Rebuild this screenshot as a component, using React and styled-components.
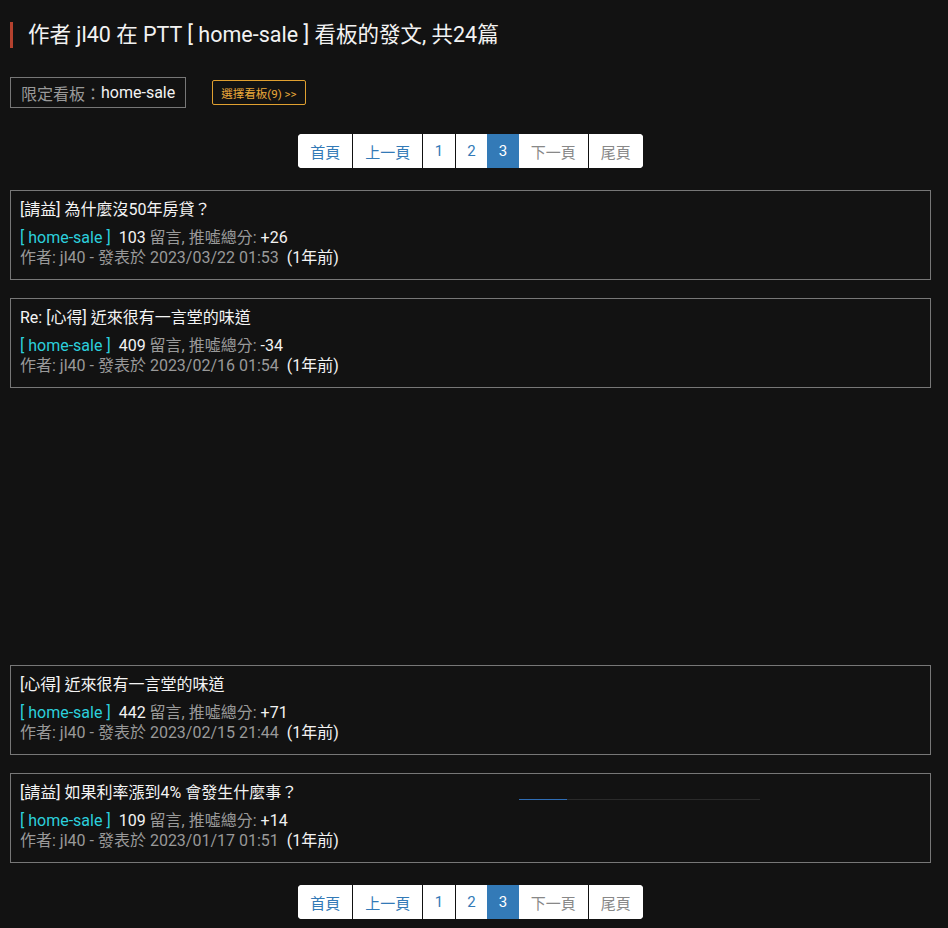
import styled, { createGlobalStyle } from "styled-components";

const posts = [
  { title: "[請益] 為什麼沒50年房貸？", comments: 103, score: "+26", date: "2023/03/22 01:53" },
  { title: "Re: [心得] 近來很有一言堂的味道", comments: 409, score: "-34", date: "2023/02/16 01:54" },
  { title: "[心得] 近來很有一言堂的味道", comments: 442, score: "+71", date: "2023/02/15 21:44", adBefore: true },
  { title: "[請益] 如果利率漲到4% 會發生什麼事？", comments: 109, score: "+14", date: "2023/01/17 01:51", loading: true },
];

const pages = [
  { label: "首頁" },
  { label: "上一頁" },
  { label: "1" },
  { label: "2" },
  { label: "3", active: true },
  { label: "下一頁", disabled: true },
  { label: "尾頁", disabled: true },
];

const Pager = () => (
  <PagerRow>
    <PagerList>
      {pages.map((p) => (
        <PageItem
          key={p.label}
          $active={p.active}
          $disabled={p.disabled}
          $digit={/^\d+$/.test(p.label)}
        >
          {p.label}
        </PageItem>
      ))}
    </PagerList>
  </PagerRow>
);

const PostCard = ({ post }) => (
  <Card>
    <PostTitle>{post.title}</PostTitle>
    <MetaLine>
      <Board>[ home-sale ]</Board>
      <Strong>{post.comments}</Strong> 留言, 推噓總分: <Strong>{post.score}</Strong>
    </MetaLine>
    <InfoLine>
      作者: jl40 - 發表於 {post.date}
      <Ago>(1年前)</Ago>
    </InfoLine>
    {post.loading && (
      <LoadBar>
        <LoadFill />
      </LoadBar>
    )}
  </Card>
);

const App = () => {
  return (
    <Page>
      <GlobalStyle />
      <Heading>作者 jl40 在 PTT [ home-sale ] 看板的發文, 共24篇</Heading>

      <FilterRow>
        <FilterBox>
          限定看板：<Strong>home-sale</Strong>
        </FilterBox>
        <PickButton>選擇看板(9) &gt;&gt;</PickButton>
      </FilterRow>

      <Pager />

      <List>
        {posts.map((post) => (
          <div key={post.date}>
            {post.adBefore && <AdSpace />}
            <PostCard post={post} />
          </div>
        ))}
      </List>

      <Pager />
    </Page>
  );
};

const GlobalStyle = createGlobalStyle`
  html, body {
    margin: 0;
    background: #121212;
  }
  body {
    font-family: Roboto, "Noto Sans CJK TC", sans-serif;
    color: #eee;
  }
`;

const Page = styled.div`
  width: 948px;
  padding: 22px 17px 8px 10px;
  min-height: 928px;
  box-sizing: border-box;
`;

const Heading = styled.h1`
  margin: 0;
  height: 26px;
  border-left: 3px solid #b4412e;
  padding-left: 15px;
  font-size: 21.5px;
  font-weight: 400;
  line-height: 26px;
  color: #f2f2f2;
  white-space: nowrap;
`;

const FilterRow = styled.div`
  display: flex;
  align-items: center;
  margin-top: 29px;
  height: 31px;
`;

const FilterBox = styled.div`
  box-sizing: border-box;
  height: 31px;
  display: flex;
  align-items: center;
  padding: 0 10px;
  border: 1px solid #777;
  font-size: 16px;
  color: #999;
`;

const PickButton = styled.div`
  margin-left: 26px;
  box-sizing: border-box;
  height: 25px;
  display: flex;
  align-items: center;
  padding: 0 8px;
  border: 1px solid #e0a030;
  border-radius: 2px;
  font-size: 11.5px;
  color: #eaa93a;
`;

const PagerRow = styled.div`
  display: flex;
  justify-content: center;
  margin: 26px 0 22px;
  &:last-child {
    margin: 4px 0 0;
  }
`;

const PagerList = styled.div`
  display: flex;
  border-radius: 4px;
  overflow: hidden;
  background: #fff;
`;

const PageItem = styled.div`
  height: 34px;
  box-sizing: border-box;
  padding: 0 ${(p) => (p.$digit ? "11.5px" : "12px")};
  display: flex;
  align-items: center;
  font-size: 15px;
  border-left: 1px solid #111;
  background: ${(p) => (p.$active ? "#337ab7" : "#fff")};
  color: ${(p) => (p.$active ? "#fff" : p.$disabled ? "#888" : "#337ab7")};
  &:first-child {
    border-left: none;
  }
  ${(p) => p.$active && "border-left: none;"}
  ${(p) => p.$disabled && "border-left: none;"}
  &:last-child {
    border-left: 1px solid #111;
  }
`;

const List = styled.div`
  display: flex;
  flex-direction: column;
`;

const AdSpace = styled.div`
  height: 259px;
`;

const Card = styled.div`
  position: relative;
  box-sizing: border-box;
  height: 90px;
  margin-bottom: 18px;
  padding: 9px 9px 10px;
  border: 1px solid #777;
`;

const PostTitle = styled.div`
  font-size: 16px;
  line-height: 20px;
  color: #f4f4f4;
`;

const MetaLine = styled.div`
  margin-top: 8px;
  font-size: 16px;
  line-height: 20px;
  color: #999;
`;

const Board = styled.span`
  color: #2ccfdc;
  font-size: 16px;
  margin-right: 8px;
`;

const Strong = styled.span`
  color: #f2f2f2;
`;

const InfoLine = styled.div`
  font-size: 16px;
  line-height: 20px;
  color: #999;
`;

const Ago = styled.span`
  margin-left: 8px;
  color: #f2f2f2;
`;

const LoadBar = styled.div`
  position: absolute;
  left: 508px;
  top: 25px;
  width: 241px;
  height: 1px;
  background: #2a2a2a;
`;

const LoadFill = styled.div`
  width: 48px;
  height: 1px;
  background: #2f6db5;
`;

export default App;
